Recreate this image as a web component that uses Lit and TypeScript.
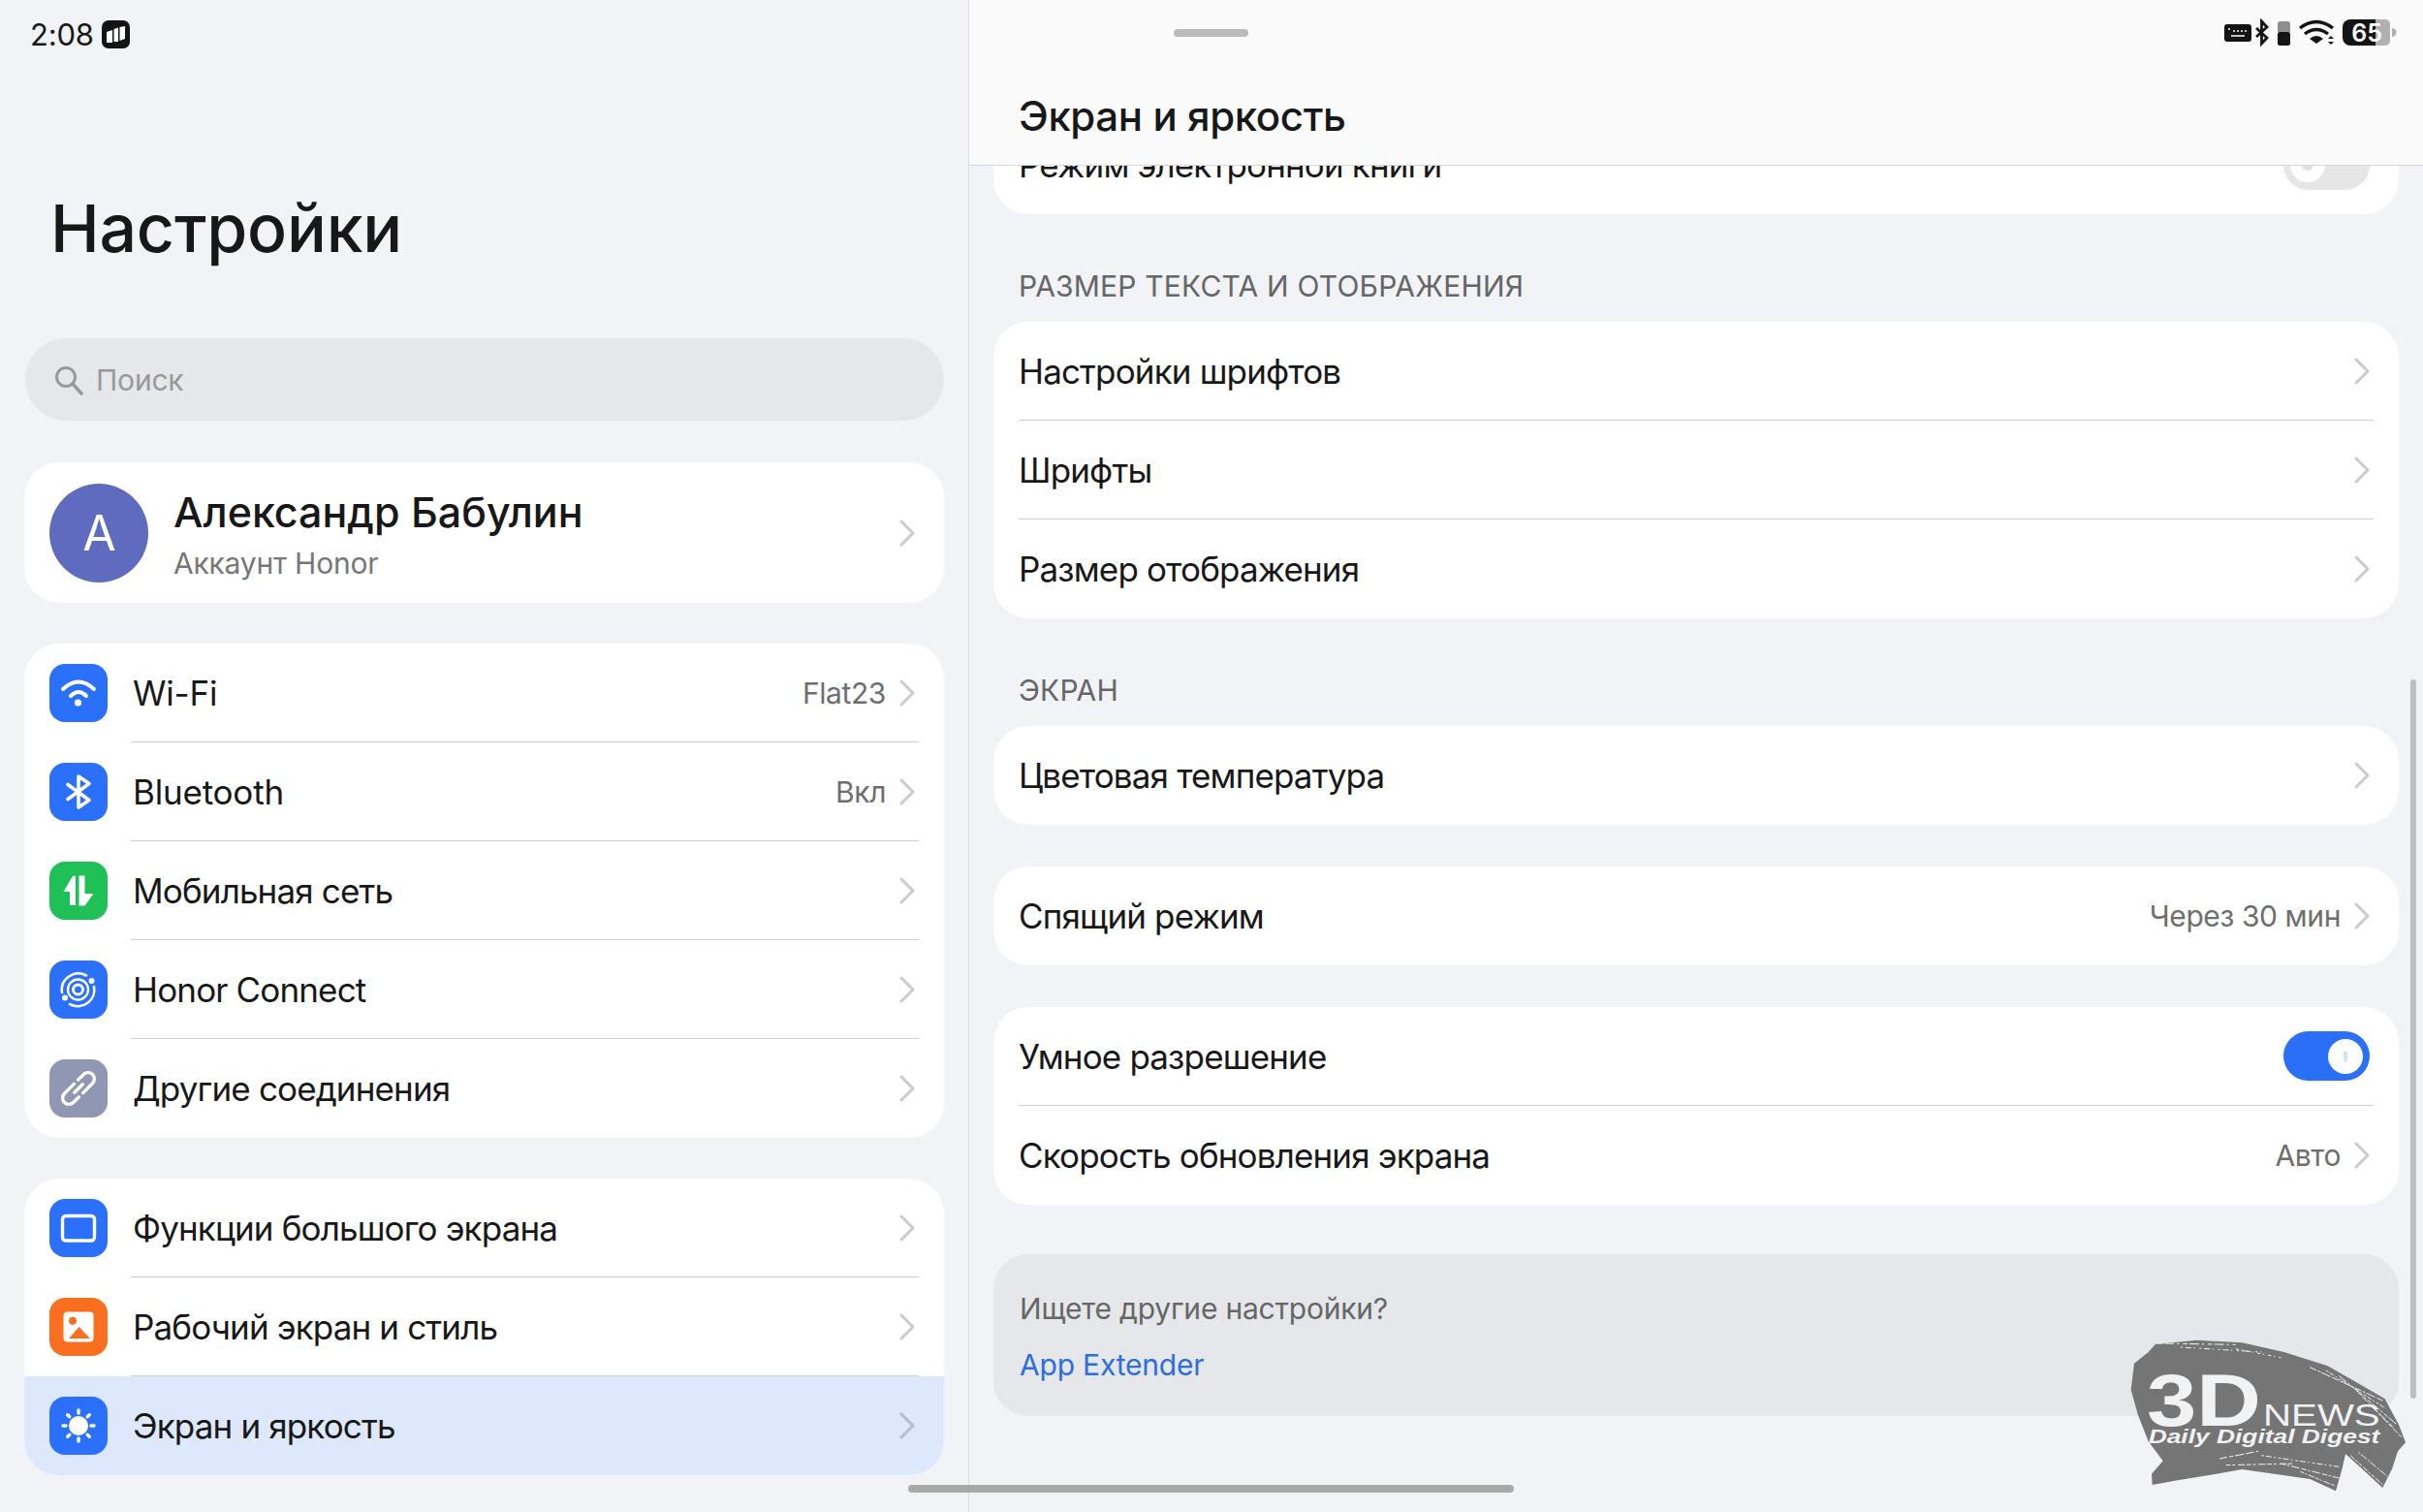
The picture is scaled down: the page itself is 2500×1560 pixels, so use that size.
import { LitElement, html, css, svg } from "lit";
import { customElement } from "lit/decorators.js";

const chevron = html`<svg class="chev" viewBox="0 0 16 28"><path d="M2 2 L14 14 L2 26" fill="none" stroke="currentColor" stroke-width="3" stroke-linecap="round" stroke-linejoin="round"/></svg>`;

const ICONS: Record<string, unknown> = {
  wifi: svg`<path d="M14 26Q30 11 46 26" fill="none" stroke="#fff" stroke-width="4" stroke-linecap="round"/><path d="M22 33Q30 25 38 33" fill="none" stroke="#fff" stroke-width="4" stroke-linecap="round"/><circle cx="29.5" cy="40" r="3.6" fill="#fff"/>`,
  bt: svg`<path d="M19 22.5L41 38.5L30 46V14L41 21.5L19 37.5" fill="none" stroke="#fff" stroke-width="3.6" stroke-linecap="round" stroke-linejoin="round"/>`,
  mobile: svg`<path d="M27 14.5V45H21V31H14.5L24 15Z" fill="#fff"/><path d="M30.5 14.5H36.5V33H45.5L36.5 45.5H30.5Z" fill="#fff"/>`,
  connect: svg`<circle cx="29.5" cy="30" r="5" fill="none" stroke="#fff" stroke-width="3"/><circle cx="29.5" cy="30" r="10.5" fill="none" stroke="#fff" stroke-width="2.4"/><path d="M13 33A17 17 0 0 1 38 15.5" fill="none" stroke="#fff" stroke-width="2.6" stroke-linecap="round"/><path d="M46 27A17 17 0 0 1 21 45" fill="none" stroke="#fff" stroke-width="2.6" stroke-linecap="round"/><circle cx="43.5" cy="21" r="3" fill="#fff"/><circle cx="16" cy="38.5" r="3" fill="#fff"/>`,
  link: svg`<g transform="rotate(-45 30 30)" fill="none" stroke="#fff" stroke-width="3.4" stroke-linecap="round"><path d="M30 23.5H16a6.5 6.5 0 0 0 0 13H24"/><path d="M30 36.5H44a6.5 6.5 0 0 0 0-13H36"/><path d="M24 30H36"/></g>`,
  screen: svg`<rect x="13.5" y="17.5" width="33" height="25.5" rx="3.5" fill="none" stroke="#fff" stroke-width="3.4"/>`,
  image: svg`<rect x="14.5" y="14.5" width="31" height="31" rx="4" fill="#fff"/><circle cx="24" cy="23.7" r="4" fill="#f96f1f"/><path d="M20 42L30.5 30L42 42Z" fill="#f96f1f"/>`,
  sun: svg`<circle cx="30" cy="30" r="10" fill="#fff"/><g stroke="#fff" stroke-width="3.4" stroke-linecap="round"><path d="M30 14V17"/><path d="M30 43V46"/><path d="M14 30H17"/><path d="M43 30H46"/><path d="M18.7 18.7L20.8 20.8"/><path d="M39.2 39.2L41.3 41.3"/><path d="M41.3 18.7L39.2 20.8"/><path d="M20.8 39.2L18.7 41.3"/></g>`,
};

const streaks: [number, number, number, number, string][] = [
  [380, 318, 620, 322, "14 6 30 9 6 12"],
  [450, 330, 700, 345, "6 9 18 7 4 14"],
  [620, 335, 760, 362, "10 8 4 12"],
  [850, 392, 1075, 495, "22 5 9 4 30 6"],
  [900, 402, 1085, 520, "9 5 14 6 5 7"],
  [940, 418, 1120, 570, "30 5 8 6 14 4"],
  [1000, 470, 1135, 610, "12 6 22 5"],
  [1040, 510, 1110, 580, "6 5 16 7"],
  [570, 675, 690, 652, "24 7 12 5 30 6"],
  [590, 695, 800, 690, "14 6 8 9 22 5"],
  [700, 665, 940, 700, "8 6 18 7 5 9"],
  [760, 690, 940, 735, "16 5 6 6 26 7"],
  [820, 715, 930, 760, "12 4 5 6 20 4"],
  [975, 665, 1075, 755, "18 4 8 5 14 4"],
  [1000, 655, 1090, 730, "7 4 22 5"],
];

@customElement("app-root")
export class AppRoot extends LitElement {
  static styles = css`
    :host {
      display: flex; position: relative; width: 2500px; height: 1560px; overflow: hidden;
      background: #f1f3f7; color: #181818;
      font-family: "Inter", "Noto Sans", sans-serif; font-size: 35px; letter-spacing: -0.85px;
    }
    .left { width: 1000px; box-sizing: border-box; padding: 0 25px; border-right: 1px solid #dcdde2; flex: none; }
    .status-l { height: 70px; display: flex; align-items: center; gap: 8px; padding-left: 6px; font-size: 31px; letter-spacing: -0.2px; }
    .status-l svg { width: 29px; height: 29px; }
    .big { font-size: 68px; line-height: 100px; padding: 115px 0 2px 27px; margin-bottom: 62px; font-weight: 500; letter-spacing: -0.2px; }
    .search { height: 85px; margin: 0 0 43px 1px; background: #e6e7ea; border-radius: 42px; display: flex; align-items: center; padding-left: 29px; gap: 12px; color: #999; font-size: 30px; letter-spacing: -0.2px; }
    .search svg { width: 32px; height: 32px; }
    .card { background: #fff; border-radius: 36px; overflow: hidden; }
    .account { height: 145px; display: flex; align-items: center; padding-left: 26px; margin-bottom: 42px; }
    .avatar { width: 102px; height: 102px; border-radius: 50%; background: #5e6bbf; color: #fff; display: flex; align-items: center; justify-content: center; font-size: 50px; flex: none; }
    .who { flex: 1; margin-left: 26px; padding-top: 4px; }
    .name { font-size: 43px; line-height: 50px; font-weight: 500; letter-spacing: 0; }
    .sub { font-size: 30px; line-height: 40px; color: #777; margin-top: 8px; letter-spacing: -0.2px; }
    .chev { width: 16px; height: 28px; color: #cbcbcb; flex: none; }
    .account .chev { margin-right: 30px; }
    .list { margin-bottom: 42px; }
    .row { height: 102px; display: flex; align-items: center; box-sizing: border-box; padding-left: 26px; }
    .row.sel { background: #dde8fc; }
    .row.sel .chev { color: #b6bdca; }
    .ico { width: 60px; height: 60px; border-radius: 16px; flex: none; margin-right: 24px; }
    .ico svg { display: block; width: 60px; height: 60px; }
    .ico + .body .label { padding-left: 2px; }
    .blue { background: #2b70fb; } .green { background: #1fc157; } .gray { background: #8f97b3; } .orange { background: #f96f1f; }
    .body { flex: 1; align-self: stretch; display: flex; align-items: center; margin-right: 26px; padding-right: 4px; border-bottom: 1px solid #cfcfd1; gap: 14px; }
    .row:last-child .body { border-bottom: 0; }
    .label { flex: 1; }
    .lat { letter-spacing: -0.2px; }
    .val { font-size: 30px; color: #6e6e6e; letter-spacing: -0.4px; }
    .right { flex: 1; display: flex; flex-direction: column; min-width: 0; }
    .head { height: 170px; flex: none; background: #fafafa; border-bottom: 1px solid #d8d8d8; position: relative; z-index: 1; }
    .status-r { height: 70px; margin-bottom: 20px; display: flex; justify-content: flex-end; padding-right: 25px; }
    .status-r svg { width: 180px; height: 35px; margin-top: 19px; }
    .title { font-size: 42px; line-height: 60px; font-weight: 500; padding-left: 51px; letter-spacing: -0.4px; }
    .scroll { flex: 1; overflow: hidden; padding: 0 25px; }
    .scroll .card { margin-bottom: 43px; }
    .scroll .first { margin-top: -52px; margin-bottom: 0; }
    .scroll .tight { margin-bottom: 0; }
    .sect { height: 111px; box-sizing: border-box; padding: 54px 0 0 26px; font-size: 30px; line-height: 40px; color: #666; letter-spacing: 0.2px; }
    .r2 { padding-left: 26px; }
    .toggle { width: 89px; height: 51px; border-radius: 26px; background: #2a6ff6; display: flex; align-items: center; justify-content: flex-end; padding: 0 7px; box-sizing: border-box; flex: none; }
    .toggle.off { background: #e6e6e6; justify-content: flex-start; }
    .knob { width: 36px; height: 36px; border-radius: 50%; background: #fff; display: flex; align-items: center; justify-content: center; }
    .knob i { width: 4px; height: 12px; border-radius: 2px; background: #d5e2fc; }
    .toggle.off .knob i { width: 12px; height: 12px; border-radius: 50%; background: #e0e0e0; }
    .more { margin-top: 51px; height: 167px; background: #e6e7ea; border-radius: 36px; padding: 36px 0 0 27px; box-sizing: border-box; font-size: 30px; line-height: 40px; color: #666; letter-spacing: -0.2px; }
    .more a { display: block; margin-top: 18px; color: #2c6de0; }
    .handle { position: absolute; left: 1211px; top: 30px; width: 77px; height: 8px; border-radius: 4px; background: #bbb; z-index: 2; }
    .home { position: absolute; left: 937px; top: 1532px; width: 625px; height: 8px; border-radius: 4px; background: #a9a9a9; z-index: 2; }
    .bar { position: absolute; left: 2487px; top: 701px; width: 6px; height: 742px; border-radius: 3px; background: #bebec2; z-index: 2; }
    .mark { position: absolute; left: 2100px; top: 1280px; width: 400px; height: 280px; z-index: 3; }
    .mark text { font-family: "Liberation Sans", sans-serif; fill: #f1f2f4; letter-spacing: 0; }
  `;

  row(ico: string, cls: string, label: string, val = "", sel = false, lat = false) {
    return html`<div class="row ${sel ? "sel" : ""}">
      <div class="ico ${cls}"><svg viewBox="0 0 60 60">${ICONS[ico]}</svg></div>
      <div class="body"><span class="label ${lat ? "lat" : ""}">${label}</span>${val ? html`<span class="val">${val}</span>` : ""}${chevron}</div>
    </div>`;
  }
  row2(label: string, val = "") {
    return html`<div class="row r2"><div class="body"><span class="label">${label}</span>${val ? html`<span class="val">${val}</span>` : ""}${chevron}</div></div>`;
  }

  render() {
    return html`
      <section class="left">
        <div class="status-l"><span>2:08</span>
          <svg viewBox="0 0 29 29"><rect width="29" height="29" rx="7" fill="#141414"/><path d="M5 12L11 10V23H5Z" fill="#fff"/><path d="M12.5 9L17 7.5V22H12.5Z" fill="#fff"/><path d="M18.5 7L24 6V19L18.5 21Z" fill="#fff"/></svg>
        </div>
        <div class="big">Настройки</div>
        <div class="search"><svg viewBox="0 0 32 32"><circle cx="13" cy="13" r="9.5" fill="none" stroke="#999" stroke-width="3"/><path d="M20 20L29 30" stroke="#999" stroke-width="3.4" stroke-linecap="round"/></svg><span>Поиск</span></div>
        <div class="card account">
          <div class="avatar">A</div>
          <div class="who"><div class="name">Александр Бабулин</div><div class="sub">Аккаунт Honor</div></div>
          ${chevron}
        </div>
        <div class="card list">
          ${this.row("wifi", "blue", "Wi-Fi", "Flat23", false, true)}
          ${this.row("bt", "blue", "Bluetooth", "Вкл", false, true)}
          ${this.row("mobile", "green", "Мобильная сеть")}
          ${this.row("connect", "blue", "Honor Connect")}
          ${this.row("link", "gray", "Другие соединения")}
        </div>
        <div class="card list">
          ${this.row("screen", "blue", "Функции большого экрана")}
          ${this.row("image", "orange", "Рабочий экран и стиль")}
          ${this.row("sun", "blue", "Экран и яркость", "", true)}
        </div>
      </section>
      <section class="right">
        <header class="head">
          <div class="status-r">
            <svg viewBox="0 0 180 35">
              <rect x="0" y="6" width="28" height="18" rx="3" fill="#141414"/>
              <path d="M4 11h2M9 13h2M13 13h2M17 13h2M21 13h2M7 18h14" stroke="#fff" stroke-width="1.6"/>
              <path d="M33 10L44 20L38.5 26V3L44 9L33 19" fill="none" stroke="#141414" stroke-width="2.8"/>
              <rect x="55" y="3" width="13" height="12" rx="2.5" fill="#8e8e8e"/><rect x="55" y="14" width="13" height="14" rx="2.5" fill="#141414"/>
              <path d="M78 10Q95 -3 112 10" fill="none" stroke="#141414" stroke-width="3.4"/><path d="M83 16Q95 7 107 16" fill="none" stroke="#141414" stroke-width="3.4"/><path d="M88 21Q95 15 102 21L95 26Z" fill="#141414"/>
              <path d="M107 21l3-3 3 3zM107 24l3 3 3-3z" fill="#141414"/>
              <path d="M122 9a8 8 0 0 1 8-8H156V28H130a8 8 0 0 1-8-8Z" fill="#141414"/>
              <path d="M156 1h10a5 5 0 0 1 5 5V23a5 5 0 0 1-5 5H156Z" fill="#b0b0b0"/>
              <path d="M173 10a4 4 0 0 1 0 9Z" fill="#b0b0b0"/>
              <text x="147" y="24" text-anchor="middle" font-family="Inter, sans-serif" font-size="25" font-weight="600" fill="#fff" letter-spacing="0">65</text>
            </svg>
          </div>
          <div class="title">Экран и яркость</div>
        </header>
        <div class="scroll">
          <div class="card first"><div class="row r2"><div class="body"><span class="label">Режим электронной книги</span><div class="toggle off"><div class="knob"><i></i></div></div></div></div></div>
          <div class="sect">РАЗМЕР ТЕКСТА И ОТОБРАЖЕНИЯ</div>
          <div class="card tight">${this.row2("Настройки шрифтов")}${this.row2("Шрифты")}${this.row2("Размер отображения")}</div>
          <div class="sect">ЭКРАН</div>
          <div class="card">${this.row2("Цветовая температура")}</div>
          <div class="card">${this.row2("Спящий режим", "Через 30 мин")}</div>
          <div class="card">
            <div class="row r2"><div class="body"><span class="label">Умное разрешение</span><div class="toggle"><div class="knob"><i></i></div></div></div></div>
            ${this.row2("Скорость обновления экрана", "Авто")}
          </div>
          <div class="more">Ищете другие настройки?<a>App Extender</a></div>
        </div>
      </section>
      <div class="handle"></div>
      <div class="home"></div>
      <div class="bar"></div>
      <svg class="mark" viewBox="0 0 1200 840">
        <path fill="#757575" d="M296 462L306 380L350 345L372 320L500 308L640 316L770 345L905 388L1010 448L1082 490L1125 570L1146 625L1122 652L1105 705L1075 765L1010 705L960 660L950 705L930 775L850 738L740 722L640 708L560 722L440 742L362 756L360 722L395 682L350 622L318 540Z"/>
        ${streaks.map(([a, b, c, d, dash]) => svg`<line x1=${a} y1=${b} x2=${c} y2=${d} stroke="#f1f3f7" stroke-width="3" stroke-dasharray=${dash}/>`)}
        <text x="345" y="572" font-size="228" font-weight="700" textLength="354" lengthAdjust="spacingAndGlyphs">3D</text>
        <text x="705" y="572" font-size="96" textLength="362" lengthAdjust="spacingAndGlyphs">NEWS</text>
        <text x="350" y="628" font-size="60" font-weight="700" font-style="italic" textLength="716" lengthAdjust="spacingAndGlyphs">Daily Digital Digest</text>
      </svg>
    `;
  }
}
